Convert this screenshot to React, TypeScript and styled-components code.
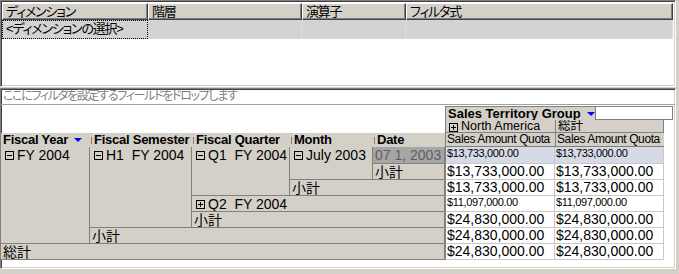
import React from "react";
import styled, { createGlobalStyle, css } from "styled-components";

const GlobalStyle = createGlobalStyle`
  html, body {
    margin: 0;
    padding: 0;
    background: #d4d0c8;
  }
  body {
    width: 679px;
    height: 274px;
    overflow: hidden;
    font-family: "Liberation Sans", "Noto Sans CJK JP", sans-serif;
    font-feature-settings: "palt";
    color: #000;
  }
`;

const Screen = styled.div`
  width: 679px;
  height: 274px;
  display: flex;
  flex-direction: column;
  gap: 1px;
`;

const Sunken = styled.div`
  width: 676px;
  box-sizing: border-box;
  background: #fff;
  border: 1px solid;
  border-color: #808080 #ffffff #ffffff #808080;
  box-shadow: inset 1px 1px 0 #404040, inset -1px -1px 0 #d4d0c8;
`;

/* ---------- filter panel (top) ---------- */

const FilterPanel = styled(Sunken)`
  height: 87px;
  padding: 2px 2px 0 1px;
`;

const FilterGrid = styled.div`
  display: grid;
  grid-template-columns: 146px 154px 104px 267px;
  grid-template-rows: 17px 19px;
`;

const FilterHead = styled.div`
  box-sizing: border-box;
  background: #d4d0c8;
  border-top: 1px solid #fff;
  border-left: 1px solid #fff;
  border-right: 1px solid #404040;
  border-bottom: 1px solid #404040;
  box-shadow: inset -1px -1px 0 #808080;
  font-size: 13px;
  letter-spacing: -1.2px;
  line-height: 15px;
  padding-left: 3px;
  white-space: nowrap;
`;

const FilterCell = styled.div<{ $focus?: boolean }>`
  box-sizing: border-box;
  background: #d3d3d3;
  font-size: 13px;
  letter-spacing: -1.2px;
  line-height: 18px;
  padding-left: 4px;
  border-right: 1px solid #dcdcdc;
  white-space: nowrap;
  ${(p) =>
    p.$focus &&
    css`
      outline: 1px dotted #000;
      outline-offset: -1px;
    `}
`;

/* ---------- pivot panel (bottom) ---------- */

const PivotPanel = styled(Sunken)`
  height: 181px;
  display: flex;
  flex-direction: column;
`;

const DropStrip = styled.div`
  height: 16px;
  box-sizing: border-box;
  border-bottom: 1px solid #a0a0a0;
  color: #808080;
  font-size: 12px;
  letter-spacing: -1.3px;
  line-height: 15px;
  padding-left: 2px;
  white-space: nowrap;
`;

const PivotGrid = styled.div`
  display: grid;
  grid-template-columns: 89px 102px 98px 83px 72px 110px 109px 1fr;
  grid-template-rows: 14px 13px 14px 17px repeat(6, 16px);
  margin-top: 1px;
`;

const Area = styled.div<{ $col: string; $row: string }>`
  grid-column: ${(p) => p.$col};
  grid-row: ${(p) => p.$row};
  box-sizing: border-box;
  min-width: 0;
  white-space: nowrap;
  overflow: hidden;
`;

const ColumnFieldRow = styled(Area)`
  display: flex;
  overflow: visible;
`;

const FieldButton = styled.div`
  width: 151px;
  box-sizing: border-box;
  background: #d4d0c8;
  border: 1px solid #808080;
  border-bottom: none;
  font-size: 13px;
  font-weight: bold;
  line-height: 13px;
  padding-left: 2px;
  display: flex;
  align-items: center;
  gap: 6px;
`;

const FieldDrop = styled.div`
  flex: 1;
  margin-right: 2px;
  background: #fff;
  border: 1px solid #808080;
  border-left: none;
`;

const Triangle = styled.span`
  display: inline-block;
  width: 0;
  height: 0;
  border-left: 4px solid transparent;
  border-right: 4px solid transparent;
  border-top: 4px solid #0000ff;
`;

const ColumnHead = styled(Area)`
  background: #d4d0c8;
  border-left: 1px solid #808080;
  border-bottom: 1px solid #808080;
  font-size: 12.5px;
  line-height: 12px;
  padding-left: 2px;
  display: flex;
  align-items: center;
  gap: 3px;
`;

const MeasureHead = styled(ColumnHead)`
  font-size: 12px;
  letter-spacing: -0.4px;
  line-height: 13px;
  padding-left: 1px;
`;

const RightRule = styled(Area)`
  border-left: 1px solid #808080;
  margin-left: -1px;
`;

const FieldHead = styled(Area)<{ $mark?: boolean }>`
  background: #d4d0c8;
  font-size: 13px;
  font-weight: bold;
  letter-spacing: -0.25px;
  line-height: 14px;
  padding-left: ${(p) => (p.$mark ? "4px" : "2px")};
  display: flex;
  align-items: center;
  gap: 6px;
  position: relative;
  ${(p) =>
    p.$mark &&
    css`
      &::before {
        content: "";
        position: absolute;
        left: 1px;
        top: 4px;
        width: 1px;
        height: 7px;
        background: #808080;
      }
    `}
`;

const MemberCell = styled(Area)<{ $dim?: boolean }>`
  background: ${(p) => (p.$dim ? "#a6a6a6" : "#d4d0c8")};
  color: ${(p) => (p.$dim ? "#5e5e5e" : "#000")};
  border-right: 1px solid #808080;
  border-bottom: 1px solid #808080;
  font-size: 14px;
  line-height: 16px;
  padding: 0 0 0 2px;
  display: flex;
  align-items: flex-start;
  gap: 3px;
`;

const ValueCell = styled(Area)<{ $small?: boolean; $selected?: boolean }>`
  background: ${(p) => (p.$selected ? "#d6dae6" : "#fff")};
  border-right: 1px solid #c8c8c8;
  border-bottom: 1px solid #c8c8c8;
  border-left: 1px solid #808080;
  font-size: ${(p) => (p.$small ? "11px" : "14px")};
  letter-spacing: ${(p) => (p.$small ? "-0.35px" : "0")};
  line-height: ${(p) => (p.$small ? "13px" : "15px")};
  padding-left: 1px;
`;

const ValueCell2 = styled(ValueCell)`
  border-left: none;
`;

const ExpandBox = styled.span<{ $plus?: boolean }>`
  flex: none;
  position: relative;
  width: 9px;
  height: 9px;
  box-sizing: border-box;
  border: 1px solid #000;
  margin-top: 4px;
  margin-left: 2px;
  &::before {
    content: "";
    position: absolute;
    left: 1px;
    top: 3px;
    width: 5px;
    height: 1px;
    background: #000;
  }
  ${(p) =>
    p.$plus &&
    css`
      &::after {
        content: "";
        position: absolute;
        left: 3px;
        top: 1px;
        width: 1px;
        height: 5px;
        background: #000;
      }
    `}
`;

const SmallBox = styled(ExpandBox)`
  margin-top: 3px;
  margin-left: 1px;
`;

type Row = { value: string; small?: boolean; selected?: boolean };

const values: Row[] = [
  { value: "$13,733,000.00", small: true, selected: true },
  { value: "$13,733,000.00" },
  { value: "$13,733,000.00" },
  { value: "$11,097,000.00", small: true },
  { value: "$24,830,000.00" },
  { value: "$24,830,000.00" },
  { value: "$24,830,000.00" },
];

export default function App() {
  return (
    <>
      <GlobalStyle />
      <Screen>
        <FilterPanel>
          <FilterGrid>
            <FilterHead>ディメンション</FilterHead>
            <FilterHead>階層</FilterHead>
            <FilterHead>演算子</FilterHead>
            <FilterHead>フィルタ式</FilterHead>
            <FilterCell $focus>&lt;ディメンションの選択&gt;</FilterCell>
            <FilterCell />
            <FilterCell />
            <FilterCell />
          </FilterGrid>
        </FilterPanel>

        <PivotPanel>
          <DropStrip>ここにフィルタを設定するフィールドをドロップします</DropStrip>
          <PivotGrid>
            <ColumnFieldRow $col="6 / 9" $row="1">
              <FieldButton>
                Sales Territory Group <Triangle />
              </FieldButton>
              <FieldDrop />
            </ColumnFieldRow>

            <ColumnHead $col="6" $row="2">
              <SmallBox $plus />
              North America
            </ColumnHead>
            <ColumnHead $col="7" $row="2">総計</ColumnHead>
            <RightRule $col="8" $row="2 / 4" />
            <MeasureHead $col="6" $row="3">Sales Amount Quota</MeasureHead>
            <MeasureHead $col="7" $row="3">Sales Amount Quota</MeasureHead>

            <FieldHead $col="1" $row="3">
              Fiscal Year <Triangle />
            </FieldHead>
            <FieldHead $col="2" $row="3" $mark>Fiscal Semester</FieldHead>
            <FieldHead $col="3" $row="3" $mark>Fiscal Quarter</FieldHead>
            <FieldHead $col="4" $row="3" $mark>Month</FieldHead>
            <FieldHead $col="5" $row="3" $mark>Date</FieldHead>

            <MemberCell $col="1" $row="4 / 10">
              <ExpandBox />
              FY 2004
            </MemberCell>
            <MemberCell $col="2" $row="4 / 9">
              <ExpandBox />
              H1&nbsp; FY 2004
            </MemberCell>
            <MemberCell $col="3" $row="4 / 7">
              <ExpandBox />
              Q1&nbsp; FY 2004
            </MemberCell>
            <MemberCell $col="4" $row="4 / 6">
              <ExpandBox />
              July 2003
            </MemberCell>
            <MemberCell $col="5" $row="4" $dim>
              07 1, 2003
            </MemberCell>
            <MemberCell $col="5" $row="5">小計</MemberCell>
            <MemberCell $col="4 / 6" $row="6">小計</MemberCell>
            <MemberCell $col="3 / 6" $row="7">
              <ExpandBox $plus />
              Q2&nbsp; FY 2004
            </MemberCell>
            <MemberCell $col="3 / 6" $row="8">小計</MemberCell>
            <MemberCell $col="2 / 6" $row="9">小計</MemberCell>
            <MemberCell $col="1 / 6" $row="10">総計</MemberCell>

            {values.map((r, i) => (
              <React.Fragment key={i}>
                <ValueCell $col="6" $row={String(i + 4)} $small={r.small} $selected={r.selected}>
                  {r.value}
                </ValueCell>
                <ValueCell2 $col="7" $row={String(i + 4)} $small={r.small} $selected={r.selected}>
                  {r.value}
                </ValueCell2>
              </React.Fragment>
            ))}
          </PivotGrid>
        </PivotPanel>
      </Screen>
    </>
  );
}
